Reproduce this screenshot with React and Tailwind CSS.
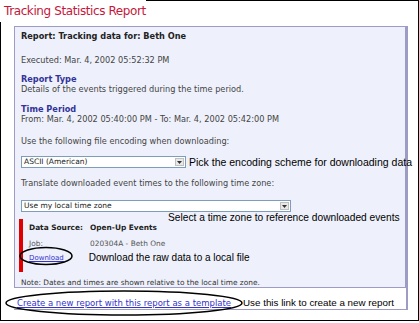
import React from "react";

const body = { fontFamily: '"DejaVu Sans", Verdana, sans-serif' };
const arial = { fontFamily: '"Liberation Sans", Arial, sans-serif' };

function Select({ width, text }) {
  return (
    <div
      className="flex h-[12px] shrink-0 items-stretch border border-[#7f9db9] bg-white"
      style={{ width }}
    >
      <div className="flex-1 pl-[2px] text-[7.5px] leading-[10px] text-[#222]">{text}</div>
      <div className="m-[1px] flex w-[9px] items-center justify-center border border-[#c0c0c0] bg-[#e8e8e8]">
        <svg width="5" height="3" viewBox="0 0 5 3">
          <path d="M0 0H5L2.5 3Z" fill="#333" />
        </svg>
      </div>
    </div>
  );
}

export default function App() {
  return (
    <div className="relative flex h-[321px] w-[419px] flex-col bg-white" style={body}>
      <div className="flex h-[22px]">
        <div
          className="pl-[4px] pt-[4px] text-[12px] leading-[15px] text-[#c4173b]"
          style={{ letterSpacing: "-0.4px" }}
        >
          Tracking Statistics Report
        </div>
        <div className="flex-1 border-r border-t border-black" />
      </div>
      <div className="flex flex-1 flex-col border-b border-l border-r border-black pl-[13px] pr-[10px] pt-[4px]">
        <div className="flex h-[284px] flex-col border-b border-r-2 border-[#9c9cc4] bg-white">
          <div className="flex h-[262px] flex-col border border-[#9c9cc4] bg-[#eef1fb] pl-[6px] pt-[4px] text-[8.2px] leading-[11px] text-[#444]">
            <div className="font-bold text-[#222]">Report: Tracking data for: Beth One</div>
            <div className="mt-[13px]">Executed: Mar. 4, 2002 05:52:32 PM</div>
            <div className="mt-[8px] font-bold text-[#333399]">Report Type</div>
            <div className="-mt-[1px]">Details of the events triggered during the time period.</div>
            <div className="mt-[9px] font-bold text-[#333399]">Time Period</div>
            <div className="-mt-[1px]">From: Mar. 4, 2002 05:40:00 PM - To: Mar. 4, 2002 05:42:00 PM</div>
            <div className="mt-[11px]">Use the following file encoding when downloading:</div>
            <div className="mt-[9px] flex items-center">
              <Select width="165px" text="ASCII (American)" />
              <div
                className="ml-[3px] whitespace-nowrap text-[10.5px] leading-[12px] text-black"
                style={arial}
              >
                Pick the encoding scheme for downloading data
              </div>
            </div>
            <div className="mt-[10px]">Translate downloaded event times to the following time zone:</div>
            <div className="mt-[11px] flex">
              <Select width="270px" text="Use my local time zone" />
            </div>
            <div className="relative -ml-[2px] mt-[7px] flex h-[53px]">
              <div className="w-[4px] bg-[#e00000]" />
              <div className="flex flex-col pl-[6px] pt-[3px] text-[7.4px]">
                <div className="flex whitespace-nowrap font-bold text-[#222]">
                  <div className="w-[61px]">Data Source:</div>
                  <div>Open-Up Events</div>
                </div>
                <div className="mt-[5px] flex whitespace-nowrap text-[#555]">
                  <div className="w-[61px]">Job:</div>
                  <div>020304A - Beth One</div>
                </div>
                <div className="mt-[3px] flex items-center">
                  <div className="text-[7px] text-[#3333cc] underline">Download</div>
                  <div
                    className="ml-[25px] whitespace-nowrap text-[10px] leading-[12px] text-black"
                    style={arial}
                  >
                    Download the raw data to a local file
                  </div>
                </div>
              </div>
              <div
                className="absolute left-[149px] top-[-7px] whitespace-nowrap text-[10.2px] leading-[12px] text-black"
                style={arial}
              >
                Select a time zone to reference downloaded events
              </div>
            </div>
            <div className="mt-[6px] text-[7.4px] leading-[9px] text-[#333]">
              Note: Dates and times are shown relative to the local time zone.
            </div>
          </div>
          <div className="flex items-center pl-[3px] pt-[9px]">
            <div className="text-[8.5px] leading-[10px] text-[#3333cc] underline">
              Create a new report with this report as a template
            </div>
            <div
              className="ml-[12px] whitespace-nowrap text-[9.8px] leading-[12px] text-black"
              style={arial}
            >
              Use this link to create a new report
            </div>
          </div>
        </div>
      </div>
      <svg className="pointer-events-none absolute left-0 top-0" width="419" height="321">
        <ellipse cx="46" cy="256" rx="26" ry="8.5" fill="none" stroke="#000" strokeWidth="1.5" />
        <ellipse cx="124" cy="303" rx="118" ry="12" fill="none" stroke="#000" strokeWidth="1.5" />
      </svg>
    </div>
  );
}
